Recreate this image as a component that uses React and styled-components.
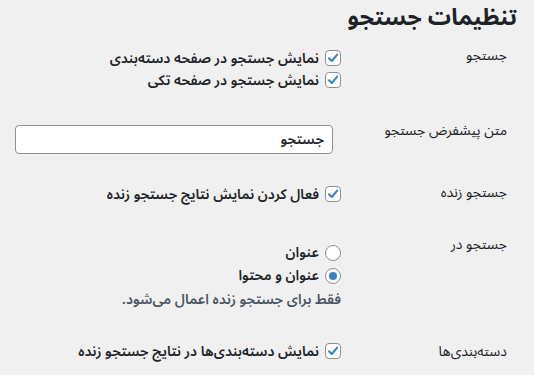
import React from 'react';
import styled, { createGlobalStyle } from 'styled-components';

const GlobalStyle = createGlobalStyle`
    html, body {
        margin: 0;
        padding: 0;
        background: #f0f0f1;
    }
    body {
        font-family: "Noto Sans Arabic", "Noto Sans", "DejaVu Sans", sans-serif;
        color: #1d2327;
        font-size: 14px;
    }
`;

const Wrap = styled.div`
    direction: rtl;
    width: 534px;
    height: 375px;
    padding: 0 17px 0 0;
    box-sizing: border-box;
    overflow: hidden;
`;

const Title = styled.h1`
    margin: 0;
    padding-top: 2px;
    font-size: 23px;
    line-height: 32px;
    font-weight: 700;
`;

const Row = styled.div`
    display: flex;
    align-items: flex-start;
    padding-right: 10px;
    margin-top: ${p => p.$gap || 0}px;
`;

const Label = styled.div`
    width: 166px;
    flex: none;
    line-height: 20px;
    padding-top: ${p => p.$top || 0}px;
`;

const Field = styled.div`
    flex: 1;
    padding-top: ${p => p.$top || 0}px;
`;

const Option = styled.label`
    display: flex;
    align-items: center;
    gap: 6px;
    height: ${p => p.$h || 20}px;
    font-weight: 600;
`;

const Box = styled.span`
    width: 16px;
    height: 16px;
    box-sizing: border-box;
    border: 1px solid #8c8f94;
    border-radius: 4px;
    background: #fff;
    display: flex;
    align-items: center;
    justify-content: center;
    flex: none;
`;

const Radio = styled(Box)`
    border-radius: 50%;

    &::after {
        content: '';
        display: ${p => (p.$on ? 'block' : 'none')};
        width: 8px;
        height: 8px;
        border-radius: 50%;
        background: #3582c4;
    }
`;

const TextInput = styled.input`
    direction: rtl;
    width: 318px;
    height: 29px;
    box-sizing: border-box;
    margin: 0 8px 0 0;
    padding: 0 8px;
    border: 1px solid #8c8f94;
    border-radius: 4px;
    background: #fff;
    font: inherit;
    font-size: 14px;
    font-weight: 600;
    color: #1d2327;
`;

const Note = styled.p`
    margin: 2px 0 0;
    line-height: 22px;
    color: #4a5464;
    font-weight: 600;
`;

function Check() {
    return (
        <Box>
            <svg width="12" height="12" viewBox="0 0 12 12">
                <path d="M2 6.2 L4.8 9 L10.2 2.6" fill="none" stroke="#3582c4" strokeWidth="2" strokeLinecap="round" strokeLinejoin="round" />
            </svg>
        </Box>
    );
}

export default function App() {
    return (
        <>
            <GlobalStyle />
            <Wrap>
                <Title>تنظیمات جستجو</Title>

                <Row $gap={4}>
                    <Label $top={8}>جستجو</Label>
                    <Field $top={9}>
                        <Option $h={22}><Check />نمایش جستجو در صفحه دسته‌بندی</Option>
                        <Option $h={22}><Check />نمایش جستجو در صفحه تکی</Option>
                    </Field>
                </Row>

                <Row $gap={7}>
                    <Label $top={23}>متن پیشفرض جستجو</Label>
                    <Field $top={27}>
                        <TextInput defaultValue="جستجو" />
                    </Field>
                </Row>

                <Row>
                    <Label $top={29}>جستجو زنده</Label>
                    <Field $top={30}>
                        <Option><Check />فعال کردن نمایش نتایج جستجو زنده</Option>
                    </Field>
                </Row>

                <Row>
                    <Label $top={31}>جستجو در</Label>
                    <Field $top={37}>
                        <Option $h={23}><Radio />عنوان</Option>
                        <Option $h={23}><Radio $on />عنوان و محتوا</Option>
                        <Note>فقط برای جستجو زنده اعمال می‌شود.</Note>
                    </Field>
                </Row>

                <Row>
                    <Label $top={31}>دسته‌بندی‌ها</Label>
                    <Field $top={30}>
                        <Option><Check />نمایش دسته‌بندی‌ها در نتایج جستجو زنده</Option>
                    </Field>
                </Row>
            </Wrap>
        </>
    );
}
